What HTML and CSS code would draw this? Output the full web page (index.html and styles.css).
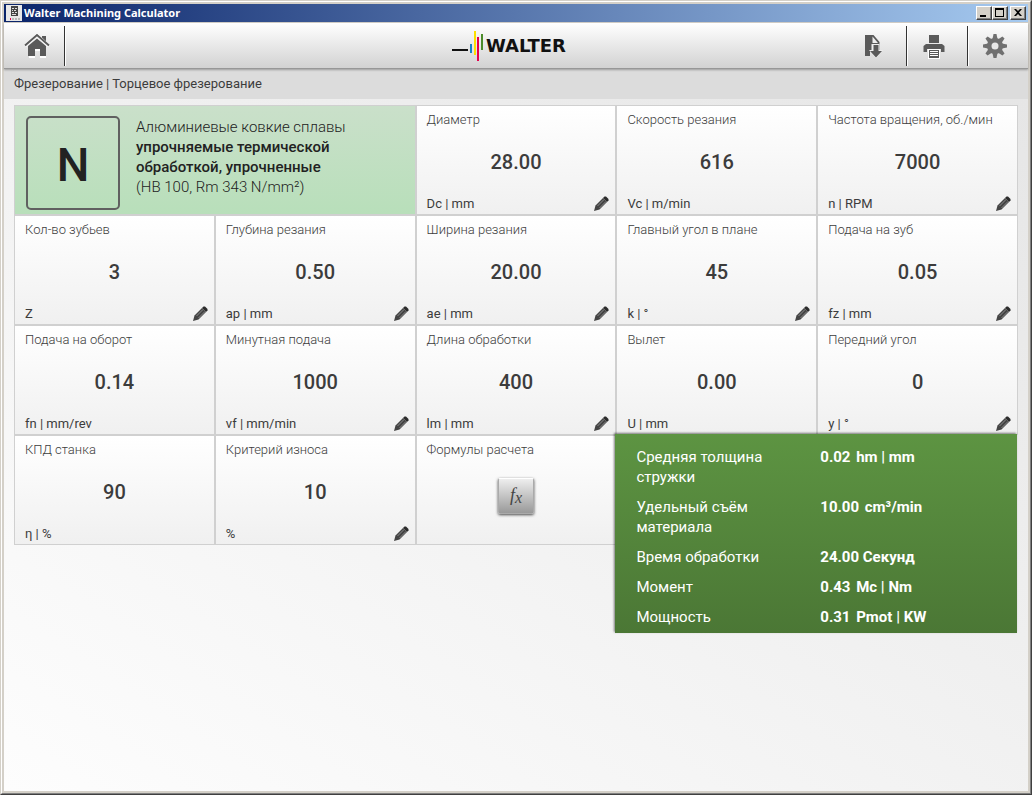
FILE: index.html
```html
<!DOCTYPE html>
<html lang="ru">
<head>
    <meta charset="UTF-8">
    <meta name="viewport" content="width=device-width, initial-scale=1.0">
    <title>Walter Machining Calculator</title>
    <link rel="stylesheet" href="styles.css">
</head>
<body>
    <svg class="sprite" aria-hidden="true">
        <symbol id="pencil" viewBox="0 0 16 16">
            <path d="M1 15l1.500-5.500L10 2l4 4-7.500 7.500z" fill="#444"/>
            <path d="M10 2l1.500-1.500h1.500l2.500 2.500v1.500L14 6z" fill="#2c2c2c"/>
            <path d="M4.500 10L11 3.500M6.500 12L13 5.500" stroke="#8a8a8a" stroke-width="1" fill="none"/>
        </symbol>
    </svg>
    <div class="window">
        <div class="window-inner">
            <div class="titlebar">
                <svg class="app-icon" viewBox="0 0 16 16">
                    <rect width="16" height="16" fill="#e8e8e8"/>
                    <path d="M5 1h7v10H5z" fill="#444"/>
                    <path d="M6 3h2v1H6zM9 3h2v1H9zM6 5h1v1H6zM8 5h2v1H8zM6 7h2v1H6zM9 7h2v1H9zM6 9h4v1H6z" fill="#ddd"/>
                    <path d="M4 13h1v2H4z" fill="#e2004f"/>
                    <path d="M6 14h2M9 14h2M12 14h2" stroke="#888"/>
                </svg>
                <span class="title">Walter Machining Calculator</span>
                <button class="win-btn" aria-label="Свернуть"><svg viewBox="0 0 12 10"><path d="M2 7h6v2H2z"/></svg></button>
                <button class="win-btn" aria-label="Развернуть"><svg viewBox="0 0 12 10"><path d="M1 0h9v9H1zM2 2v6h7V2z" fill-rule="evenodd"/></svg></button>
                <button class="win-btn close" aria-label="Закрыть"><svg viewBox="0 0 12 10"><path d="M2 1h2l2 2 2-2h2L7 4.500 10 8H8L6 6 4 8H2l3-3.500z"/></svg></button>
            </div>

            <header class="toolbar">
                <a href="#" class="tool home" aria-label="Домой">
                    <svg viewBox="0 0 26 26">
                        <path d="M13 4l9 8v12h-6v-7h-5v7H5V12z" fill="#fff" transform="translate(0 1)"/>
                        <path d="M13 5.500L22 13v10h-6v-7h-5v7H4V13z" fill="#5a5a5a"/>
                        <path d="M18 3h4v7l-4-3z" fill="#5a5a5a"/>
                        <path d="M1 13L13 2l12 11" fill="none" stroke="#fff" stroke-width="3"/>
                        <path d="M1 12.500L13 2l12 10.500" fill="none" stroke="#5a5a5a" stroke-width="2"/>
                    </svg>
                </a>
                <div class="logo">
                    <svg viewBox="0 0 32 30">
                        <path d="M0 18h16v2H0z" fill="#111"/>
                        <path d="M18 13h2v9h-2z" fill="#1583c5"/>
                        <path d="M22 0h2v24h-2z" fill="#fce000"/>
                        <path d="M25 6h2v24h-2z" fill="#e6004c"/>
                        <path d="M29 3h2v16h-2z" fill="#4b8b2b"/>
                    </svg>
                    <span>WALTER</span>
                </div>
                <nav class="tools">
                    <button class="tool" aria-label="Экспорт">
                        <svg viewBox="0 0 26 26">
                            <path d="M5 2h8.500l6 7v9H10v5H5z" fill="#5a5a5a"/>
                            <path d="M12.500 3.500V10H18z" fill="#eee"/>
                            <path d="M11.500 11h8v6h3.500l-7 8.500L9 17h2.500z" fill="#eee"/>
                            <path d="M13.500 12h5v6H22l-6 6.500L10 18h3.500z" fill="#5a5a5a"/>
                        </svg>
                    </button>
                    <button class="tool" aria-label="Печать">
                        <svg viewBox="0 0 26 26">
                            <path d="M8 2h10v8H8z" fill="#5a5a5a"/>
                            <path d="M5 11h16l2.500 2v6H20v-3H6v3H2.500v-6z" fill="#5a5a5a"/>
                            <path d="M7 16h12v10H7z" fill="#fff"/>
                            <path d="M8 17h10v8H8zM9 18v1h8v-1zM9 20v1h8v-1zM9 22v1h8v-1z" fill="#5a5a5a" fill-rule="evenodd"/>
                        </svg>
                    </button>
                    <button class="tool" aria-label="Настройки">
                        <svg viewBox="0 0 26 26">
                            <g fill="#707070">
                                <path id="tooth" d="M10.500 6l1-5h3l1 5v14l-1 5h-3l-1-5z"/>
                                <use href="#tooth" transform="rotate(45 13 13)"/>
                                <use href="#tooth" transform="rotate(90 13 13)"/>
                                <use href="#tooth" transform="rotate(135 13 13)"/>
                                <circle cx="13" cy="13" r="8"/>
                            </g>
                            <circle cx="13" cy="13" r="3.500" fill="#e8e8e8"/>
                        </svg>
                    </button>
                </nav>
            </header>

            <div class="breadcrumb">Фрезерование | Торцевое фрезерование</div>

            <main class="grid">
                <section class="material">
                    <div class="material-code">N</div>
                    <p>Алюминиевые ковкие сплавы<br>
                        <b>упрочняемые термической<br>обработкой, упрочненные</b><br>
                        (HB 100, Rm 343 N/mm²)</p>
                </section>
                <section class="tile">
                    <h2>Диаметр</h2>
                    <div class="value">28.00</div>
                    <div class="unit">Dc | mm<button class="edit" aria-label="Изменить"><svg><use href="#pencil"/></svg></button></div>
                </section>
                <section class="tile">
                    <h2>Скорость резания</h2>
                    <div class="value">616</div>
                    <div class="unit">Vc | m/min</div>
                </section>
                <section class="tile">
                    <h2>Частота вращения, об./мин</h2>
                    <div class="value">7000</div>
                    <div class="unit">n | RPM<button class="edit" aria-label="Изменить"><svg><use href="#pencil"/></svg></button></div>
                </section>

                <section class="tile">
                    <h2>Кол-во зубьев</h2>
                    <div class="value">3</div>
                    <div class="unit">Z<button class="edit" aria-label="Изменить"><svg><use href="#pencil"/></svg></button></div>
                </section>
                <section class="tile">
                    <h2>Глубина резания</h2>
                    <div class="value">0.50</div>
                    <div class="unit">ap | mm<button class="edit" aria-label="Изменить"><svg><use href="#pencil"/></svg></button></div>
                </section>
                <section class="tile">
                    <h2>Ширина резания</h2>
                    <div class="value">20.00</div>
                    <div class="unit">ae | mm<button class="edit" aria-label="Изменить"><svg><use href="#pencil"/></svg></button></div>
                </section>
                <section class="tile">
                    <h2>Главный угол в плане</h2>
                    <div class="value">45</div>
                    <div class="unit">k | °<button class="edit" aria-label="Изменить"><svg><use href="#pencil"/></svg></button></div>
                </section>
                <section class="tile">
                    <h2>Подача на зуб</h2>
                    <div class="value">0.05</div>
                    <div class="unit">fz | mm<button class="edit" aria-label="Изменить"><svg><use href="#pencil"/></svg></button></div>
                </section>

                <section class="tile">
                    <h2>Подача на оборот</h2>
                    <div class="value">0.14</div>
                    <div class="unit">fn | mm/rev</div>
                </section>
                <section class="tile">
                    <h2>Минутная подача</h2>
                    <div class="value">1000</div>
                    <div class="unit">vf | mm/min<button class="edit" aria-label="Изменить"><svg><use href="#pencil"/></svg></button></div>
                </section>
                <section class="tile">
                    <h2>Длина обработки</h2>
                    <div class="value">400</div>
                    <div class="unit">lm | mm<button class="edit" aria-label="Изменить"><svg><use href="#pencil"/></svg></button></div>
                </section>
                <section class="tile">
                    <h2>Вылет</h2>
                    <div class="value">0.00</div>
                    <div class="unit">U | mm</div>
                </section>
                <section class="tile">
                    <h2>Передний угол</h2>
                    <div class="value">0</div>
                    <div class="unit">y | °<button class="edit" aria-label="Изменить"><svg><use href="#pencil"/></svg></button></div>
                </section>

                <section class="tile">
                    <h2>КПД станка</h2>
                    <div class="value">90</div>
                    <div class="unit">η | %</div>
                </section>
                <section class="tile">
                    <h2>Критерий износа</h2>
                    <div class="value">10</div>
                    <div class="unit">%<button class="edit" aria-label="Изменить"><svg><use href="#pencil"/></svg></button></div>
                </section>
                <section class="tile formulas">
                    <h2>Формулы расчета</h2>
                    <button class="fx"><i>f</i><i class="sub">x</i></button>
                </section>

                <section class="results">
                    <table>
                        <tr><th scope="row">Средняя толщина стружки</th><td><span>0.02</span> hm | mm</td></tr>
                        <tr><th scope="row">Удельный съём материала</th><td><span>10.00</span> cm³/min</td></tr>
                        <tr><th scope="row">Время обработки</th><td>24.00 Секунд</td></tr>
                        <tr><th scope="row">Момент</th><td><span>0.43</span> Mc | Nm</td></tr>
                        <tr><th scope="row">Мощность</th><td><span>0.31</span> Pmot | KW</td></tr>
                    </table>
                </section>
            </main>
        </div>
    </div>
</body>
</html>
```
FILE: styles.css
```css
* {
    box-sizing: border-box;
}

body {
    margin: 0;
    font-family: Roboto, "Noto Sans", sans-serif;
    color: #3c3c3c;
}

button {
    padding: 0;
    border: 0;
    background: none;
    cursor: pointer;
}

svg {
    display: block;
}

.sprite {
    display: none;
}

/* window frame */
.window {
    display: flex;
    min-height: 100vh;
    border: 1px solid #d4d0c8;
    border-right-color: #404040;
    border-bottom-color: #404040;
}

.window-inner {
    flex: 1;
    display: flex;
    flex-direction: column;
    padding: 2px;
    background: #d4d0c8;
    border: 1px solid #fff;
    border-right-color: #808080;
    border-bottom-color: #808080;
}

.titlebar {
    display: flex;
    align-items: center;
    height: 18px;
    margin-bottom: 1px;
    padding: 0 2px;
    background: linear-gradient(to right, #0a246a, #a6caf0);
}

.app-icon {
    width: 16px;
    height: 16px;
}

.title {
    flex: 1;
    margin-left: 2px;
    color: #fff;
    font: bold 11px/18px "Noto Sans", "Open Sans", sans-serif;
}

.win-btn {
    width: 16px;
    height: 14px;
    padding: 1px;
    background: #d4d0c8;
    border: 1px solid #fff;
    border-right-color: #404040;
    border-bottom-color: #404040;
    box-shadow: inset -1px -1px #808080;
}

.win-btn.close {
    margin-left: 2px;
}

.win-btn svg {
    width: 12px;
    height: 10px;
}

/* toolbar */
.toolbar {
    position: relative;
    z-index: 1;
    display: grid;
    grid-template-columns: 1fr auto 1fr;
    align-items: center;
    height: 46px;
    background: linear-gradient(#fff, #d2d2d2);
    border-bottom: 1px solid #979797;
    box-shadow: 0 1px 2px rgba(0, 0, 0, 0.3);
}

.tool {
    display: flex;
    align-items: center;
    justify-content: center;
    width: 61px;
    height: 40px;
    border-left: 1px solid #333;
    box-shadow: inset 1px 0 #fff;
}

.tools .tool {
    padding-right: 6px;
}

.tool:first-child {
    border-left: 0;
    box-shadow: none;
}

.tool.home {
    padding-left: 5px;
    border-right: 1px solid #333;
    box-shadow: 1px 0 #fff;
}

.tool svg {
    width: 26px;
    height: 26px;
}

.tools {
    display: flex;
    justify-content: flex-end;
}

.logo {
    display: flex;
    align-items: center;
    gap: 2px;
    margin-right: 14px;
    color: #111;
    font: bold 18px/30px "DejaVu Sans", sans-serif;
}

.logo svg {
    width: 32px;
    height: 30px;
}

.breadcrumb {
    padding: 0 10px;
    background: #dcdcdc;
    font-size: 13px;
    line-height: 30px;
}

/* parameters */
.grid {
    flex: 1;
    display: grid;
    grid-template-columns: repeat(5, 1fr);
    grid-template-rows: repeat(4, 110px);
    grid-auto-rows: min-content;
    padding: 6px 10px;
    background: linear-gradient(to top right, #fdfdfd, #e6e6e6);
}

.tile,
.material {
    border: 1px solid #d0d0d0;
}

.tile {
    display: flex;
    flex-direction: column;
    padding: 4px 6px 0 10px;
    background: linear-gradient(#fff, #f0f0f0);
}

.tile h2 {
    margin: 0;
    font-size: 13px;
    font-weight: 300;
    line-height: 20px;
    white-space: nowrap;
}

.value {
    flex: 1;
    padding-right: 4px;
    font-size: 20px;
    font-weight: 500;
    line-height: 64px;
    text-align: center;
}

.unit {
    display: flex;
    align-items: center;
    justify-content: space-between;
    font-size: 13px;
    line-height: 20px;
}

.edit svg {
    width: 16px;
    height: 16px;
}

.material {
    grid-column: span 2;
    display: flex;
    gap: 16px;
    padding: 10px 11px;
    background: linear-gradient(#cae0ca, #b8dfba);
    color: #222;
}

.material-code {
    width: 94px;
    height: 94px;
    border: 2px solid #606060;
    border-radius: 5px;
    font-size: 46px;
    font-weight: 500;
    line-height: 94px;
    text-align: center;
}

.material p {
    margin: 1px 0;
    font-size: 15px;
    font-weight: 300;
    line-height: 20px;
}

.material b {
    font-weight: 500;
}

.formulas {
    gap: 18px;
}

.fx {
    align-self: center;
    width: 36px;
    height: 36px;
    margin-right: 4px;
    background: linear-gradient(#eee, #999);
    border: 1px solid #aaa;
    border-top-color: #fff;
    border-radius: 2px;
    box-shadow: 0 1px 3px rgba(0, 0, 0, 0.7);
    color: #444;
    font: 18px/30px "Liberation Serif", serif;
}

.fx .sub {
    font-size: 16px;
    vertical-align: -2px;
}

/* calculated results */
.results {
    grid-column: 4 / span 2;
    grid-row: 4 / span 2;
    margin: -1px 1px 0 -1px;
    padding: 8px 20px 1px 21px;
    background: linear-gradient(#5d9442, #4b7735);
    box-shadow: -1px -1px 2px rgba(0, 0, 0, 0.5);
    color: #fff;
}

.results table {
    width: 100%;
    border-collapse: collapse;
    table-layout: fixed;
}

.results th,
.results td {
    padding: 5px 0;
    font-size: 15px;
    line-height: 20px;
    text-align: left;
    vertical-align: top;
}

.results th {
    width: 51%;
    padding-right: 40px;
    font-weight: 400;
}

.results td {
    font-weight: 700;
}

.results span {
    margin-right: 2px;
}
```
